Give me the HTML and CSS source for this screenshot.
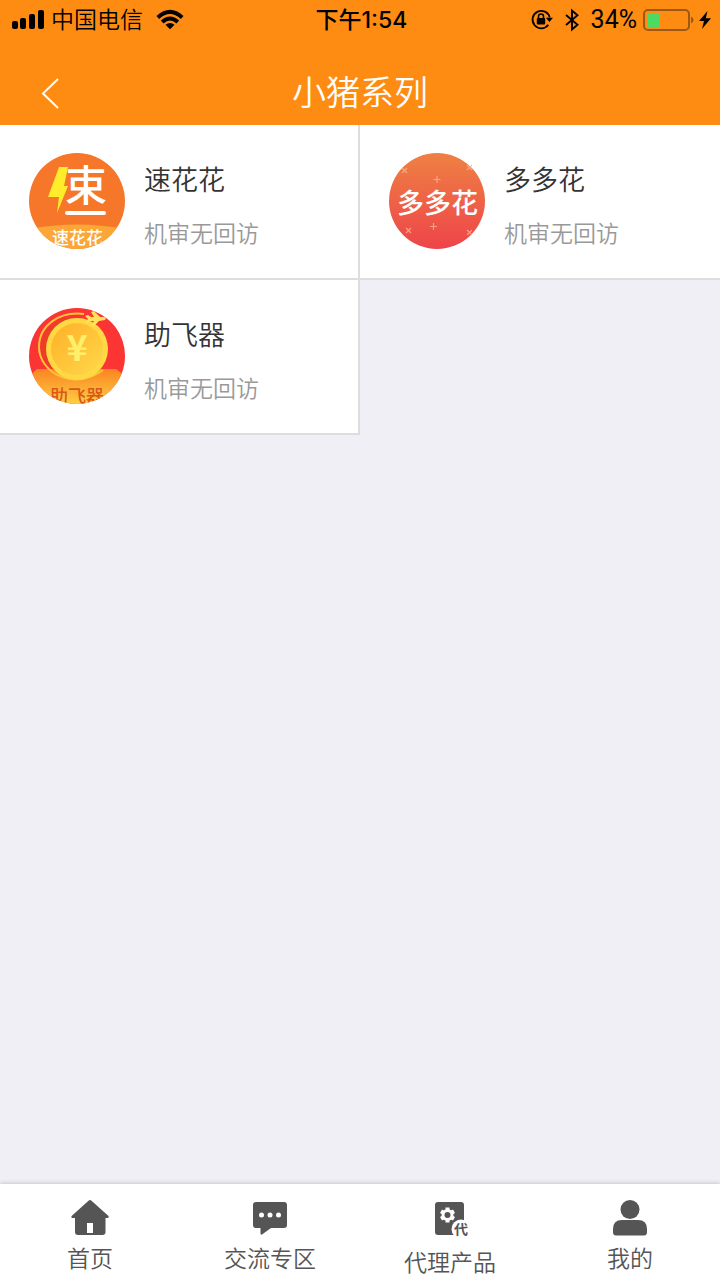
FILE: index.html
```html
<!DOCTYPE html>
<html lang="zh-CN">
<head>
<meta charset="utf-8">
<meta name="viewport" content="width=device-width, initial-scale=1">
<title>小猪系列</title>
<link rel="stylesheet" href="styles.css">
</head>
<body>
<div class="app">
  <header class="top">
    <div class="status">
      <div class="status-left">
        <svg width="32" height="20" viewBox="0 0 32 20" aria-hidden="true"><rect x="0" y="11" width="6" height="8" rx="2"/><rect x="8" y="8" width="6" height="11" rx="2"/><rect x="17" y="4" width="6" height="15" rx="2"/><rect x="26" y="0" width="6" height="19" rx="2"/></svg>
        <span class="carrier">中国电信</span>
        <svg width="28" height="20" viewBox="0 0 28 20" aria-hidden="true"><g fill="none" stroke="#000" stroke-width="4"><path d="M1.8 7.5Q14-3.6 26.2 7.5"/><path d="M6.2 12Q14 5 21.8 12"/></g><path d="M9.5 14.8Q14 11.2 18.500 14.8L14 19.300Z"/></svg>
      </div>
      <div class="clock">下午1:54</div>
      <div class="status-right">
        <svg width="22" height="22" viewBox="0 0 22 22" aria-hidden="true"><path d="M17.300 15.700A8.700 8.700 0 1 1 18.700 8.500" fill="none" stroke="#000" stroke-width="1.800"/><path d="M14.800 8.700H22L18.400 13Z"/><rect x="5.800" y="9" width="8.400" height="6.500" rx="1"/><path d="M7.500 9.500V7.500a2.500 2.500 0 0 1 5 0V9.500" fill="none" stroke="#000" stroke-width="1.600"/></svg>
        <svg class="bt" width="14" height="22" viewBox="0 0 14 22" aria-hidden="true"><path d="M1 6L12.500 15.800L7 20.500V1.500L12.500 6.200L1 16" fill="none" stroke="#000" stroke-width="1.900"/></svg>
        <span class="percent">34%</span>
        <svg width="50" height="22" viewBox="0 0 50 22" aria-hidden="true"><rect x="1" y="1" width="45" height="20" rx="4" fill="none" stroke="#9b5a14" stroke-width="2"/><rect x="4" y="4" width="13" height="14" fill="#4cd964"/><path d="M48 7.500Q50.500 8.500 50.500 11T48 14.500Z" fill="#9b5a14"/></svg>
        <svg class="bolt" width="12" height="18" viewBox="0 0 12 18" aria-hidden="true"><path d="M8.500 0L0 10H5L3 18L12 7.200H6.800Z"/></svg>
      </div>
    </div>
    <div class="bar">
      <button class="back" type="button" aria-label="返回"><svg width="18" height="32" viewBox="0 0 18 32"><path d="M17 2L2 16.500L17 31" fill="none" stroke="#fff" stroke-width="2"/></svg></button>
      <h1 class="title">小猪系列</h1>
    </div>
  </header>

  <main class="content">
    <div class="grid">
      <a class="card" href="#suhuahua">
        <svg class="logo" viewBox="0 0 96 96" aria-hidden="true">
          <defs><clipPath id="round"><circle cx="48" cy="48" r="48"/></clipPath></defs>
          <g clip-path="url(#round)">
            <rect width="96" height="96" fill="#f6772a"/>
            <path d="M0 76Q48 67 96 76V96H0Z" fill="#fba636"/>
            <path d="M30 14H39L35 33H39L28 60L30 44H19Z" fill="#ffed2c"/>
            <text class="mark-su" x="36" y="48">束</text>
            <path d="M38 60H75" stroke="#fff" stroke-width="4" stroke-linecap="round"/>
            <text class="mark-caption" x="23" y="91">速花花</text>
          </g>
        </svg>
        <span class="info"><span class="name">速花花</span><span class="desc">机审无回访</span></span>
      </a>
      <a class="card" href="#duoduohua">
        <svg class="logo" viewBox="0 0 96 96" aria-hidden="true">
          <defs><linearGradient id="coral" x1="0" y1="0" x2="0" y2="1"><stop offset="0" stop-color="#ee8143"/><stop offset="1" stop-color="#ee444a"/></linearGradient></defs>
          <circle cx="48" cy="48" r="48" fill="url(#coral)"/>
          <g stroke="#fab48f" stroke-width="1.200" opacity=".8"><path d="M13 15l5 5M18 15l-5 5M48 23v7M44.500 26.500h7M78 12l5 5M83 12l-5 5M17 75l5 5M22 75l-5 5M44.500 70v7M41 73.500h7M78 77l5 5M83 77l-5 5"/></g>
          <text class="mark-duo" x="8" y="60">多多花</text>
        </svg>
        <span class="info"><span class="name">多多花</span><span class="desc">机审无回访</span></span>
      </a>
      <a class="card" href="#zhufeiqi">
        <svg class="logo" viewBox="0 0 96 96" aria-hidden="true">
          <defs><linearGradient id="gold" x1="0" y1="0" x2="1" y2="1"><stop offset="0" stop-color="#ffb028"/><stop offset="1" stop-color="#ffd84b"/></linearGradient><linearGradient id="hill" x1="0" y1="0" x2="0" y2="1"><stop offset="0" stop-color="#fa8422"/><stop offset="1" stop-color="#ffce43"/></linearGradient></defs>
          <g clip-path="url(#round)">
            <rect width="96" height="96" fill="#fb3434"/>
            <path d="M0 68L8 61H87L96 68V96H0Z" fill="url(#hill)"/>
            <path d="M55 6C31 3 10 17 10 39C10 64 44 84 74 62" fill="none" stroke="#ffc536" stroke-width="2"/>
            <path d="M44 10C25 13 14 26 15 42C17 57 29 65 43 66" fill="none" stroke="#e84124" stroke-width="4"/>
            <circle cx="48" cy="41" r="31" fill="#ffd944"/><circle cx="48" cy="41" r="26" fill="url(#gold)"/>
            <text class="mark-yen" x="48" y="53">¥</text>
            <path d="M56 8L59 7L62 9H65L62 4L65 3L71 9L75 9Q78 10 76 12L70 13L65 18L62 18L65 13H61L58 15L57 14L59 11Z" fill="#ffe35b"/>
            <text class="mark-fly" x="21" y="95">助飞器</text>
          </g>
        </svg>
        <span class="info"><span class="name">助飞器</span><span class="desc">机审无回访</span></span>
      </a>
    </div>
  </main>

  <nav class="tabs">
    <a class="tab" href="#home">
      <svg width="38" height="36" viewBox="0 0 38 36" aria-hidden="true"><path fill-rule="evenodd" d="M17.500 .8Q19 -.6 20.500 .8L37.500 16Q38.300 18 36 18H34.500V32Q34.500 35 31.500 35H7Q4 35 4 32V18H2Q-.3 18 .6 16ZM16 23V33H22V23Z"/></svg>
      <span>首页</span>
    </a>
    <a class="tab" href="#forum">
      <svg width="36" height="36" viewBox="0 0 36 36" aria-hidden="true"><path d="M4 2H32Q35 2 35 5V25Q35 28 32 28H19L10 34.500Q8.500 35 8.500 33.500V28H4Q1 28 1 25V5Q1 2 4 2Z"/><g fill="#fff"><circle cx="9.500" cy="15" r="2.500"/><circle cx="18" cy="15" r="2.500"/><circle cx="26.500" cy="15" r="2.500"/></g></svg>
      <span>交流专区</span>
    </a>
    <a class="tab" href="#products">
      <svg width="36" height="40" viewBox="0 0 36 40" aria-hidden="true"><rect x="3" y="2" width="29" height="33" rx="3"/><g fill="#fff"><circle cx="15.500" cy="15" r="6"/><path d="M13.500 7.500h4v15h-4zM8 13l2-3.500 13 7.500-2 3.500zM8 17l2 3.500L23 13l-2-3.500z"/></g><circle cx="15.500" cy="15" r="3"/><circle cx="29" cy="29" r="9.500" fill="#fff"/><text class="mark-agent" x="22" y="34">代</text></svg>
      <span>代理产品</span>
    </a>
    <a class="tab" href="#mine">
      <svg width="36" height="36" viewBox="0 0 36 36" aria-hidden="true"><circle cx="18" cy="9.500" r="9.500"/><path d="M10 20H26Q35 20 35 29V32Q35 35.500 32 35.500H4Q1 35.500 1 32V29Q1 20 10 20Z"/></svg>
      <span>我的</span>
    </a>
  </nav>
</div>
</body>
</html>
```

FILE: styles.css
```css
* { box-sizing: border-box; }

body {
  margin: 0;
  background: #efeff5;
  font-family: Inter, "Noto Sans CJK SC", sans-serif;
}

a { color: inherit; text-decoration: none; }
svg { display: block; flex: none; overflow: visible; }

.app { display: flex; flex-direction: column; min-height: 100vh; }

.top { background: #ff8c12; color: #fff; }

.status {
  display: grid;
  grid-template-columns: 1fr auto 1fr;
  align-items: center;
  height: 40px;
  padding: 0 9px 0 12px;
  color: #000;
  font-size: 23px;
  line-height: 40px;
}
.status-left, .status-right { display: flex; align-items: center; }
.status-right { justify-content: flex-end; }
.carrier { margin: 0 13px 0 7px; font-weight: 350; }
.clock { font-weight: 500; }
.bt { margin: 0 12px; }
.percent { margin-right: 6px; font-family: Roboto, sans-serif; font-size: 25px; }
.bolt { margin-left: 6px; }

.bar {
  display: grid;
  grid-template-columns: 100px 1fr 100px;
  align-items: center;
  height: 85px;
  padding-top: 20px;
}
.back {
  justify-self: start;
  height: 56px;
  padding: 0 41px;
  border: 0;
  background: none;
}
.title {
  margin: 0;
  font-size: 34px;
  font-weight: 350;
  line-height: 48px;
  text-align: center;
}

.content { flex: 1; }

.grid { display: grid; grid-template-columns: 1fr 1fr; }

.card {
  display: flex;
  gap: 19px;
  padding: 28px 20px 29px 29px;
  border-right: 2px solid #ddd;
  border-bottom: 2px solid #ddd;
  background: #fff;
}
.card:nth-child(even) { border-right: 0; }

.logo { width: 96px; height: 96px; }
.logo text { font-family: "Noto Sans CJK SC", sans-serif; }
.mark-su { fill: #fff; font-size: 42px; font-weight: 500; }
.mark-caption { fill: #fff; font-size: 17px; font-weight: 500; }
.mark-duo { fill: #fff; font-size: 27px; font-weight: 500; }
.mark-yen { fill: #fff06a; font-size: 36px; font-weight: 700; text-anchor: middle; }
.mark-fly { fill: #d9571b; font-size: 18px; font-weight: 500; }

.info {
  display: flex;
  flex-direction: column;
  justify-content: space-between;
  padding-top: 8px;
}
.name { color: #333; font-size: 27px; font-weight: 350; line-height: 40px; }
.desc { color: #999; font-size: 23px; font-weight: 350; line-height: 30px; }

.tabs {
  display: grid;
  grid-template-columns: repeat(4, 1fr);
  min-height: 96px;
  background: #fff;
  box-shadow: 0 -1px 4px #c8c8d0;
}
.tab {
  display: flex;
  flex-direction: column;
  align-items: center;
  gap: 7px;
  padding-top: 16px;
  color: #555;
  fill: #555;
  font-size: 23px;
  font-weight: 350;
  line-height: 32px;
}
.mark-agent { font-family: "Noto Sans CJK SC", sans-serif; font-size: 14px; font-weight: 700; }
```
